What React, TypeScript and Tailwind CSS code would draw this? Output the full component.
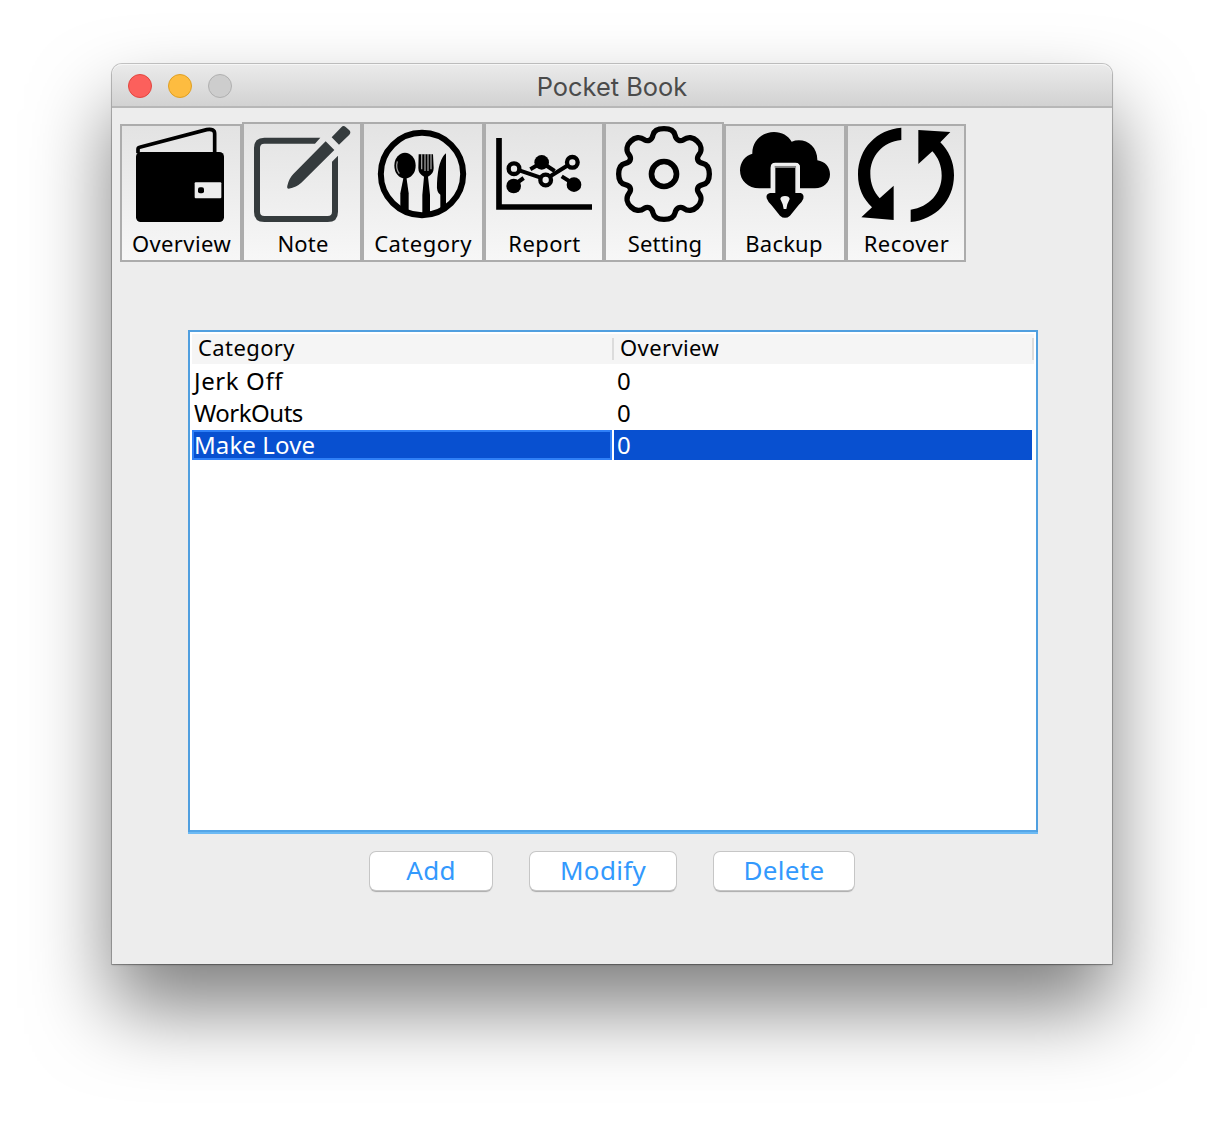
import React from "react";

function WalletIcon() {
  return (
    <svg className="block h-[96px] w-full shrink-0" viewBox="21 33 354 288">
      <path d="M69 114V103Q69 98 74 97L275 44Q299 40 299 56V114" fill="none" stroke="#000" strokeWidth="11" />
      <rect x="63" y="111" width="264" height="210" rx="14" />
      <rect x="239" y="202" width="80" height="48" rx="3" fill="#ededed" />
      <rect x="249" y="217" width="18" height="18" rx="6" />
    </svg>
  );
}

function NoteIcon() {
  return (
    <svg className="block h-[96px] w-full shrink-0" viewBox="387 33 348 288" fill="#353b3d">
      <path d="M616 68H448Q417 68 417 99V290Q417 321 448 321H638Q669 321 669 290V122L651 140V290Q651 303 638 303H448Q435 303 435 290V99Q435 86 448 86H600Z" />
      <path d="M632 79L658 105L559 203Q545 216 521 221Q515 221 517 212Q522 190 535 177Z" />
      <path d="M650 67L679 37Q685 30 692 36L703 46Q709 52 703 59L672 89Z" />
    </svg>
  );
}

function CategoryIcon() {
  return (
    <svg className="block h-[96px] w-full shrink-0" viewBox="12 33 354 288">
      <circle cx="186" cy="177" r="123.500" fill="none" stroke="#000" strokeWidth="18" />
      <ellipse cx="135" cy="152" rx="32" ry="39" />
      <path d="M112 139Q106 160 118 176" fill="none" stroke="#999" strokeWidth="4" />
      <path d="M131 185H139L146 235V296L121 286V235Z" />
      <path d="M176 118H219L221 159Q221 177 204 185L210 240V302H187V240L192 185Q175 177 175 159Z" />
      <path d="M185 117V163M195 117V168M204 117V168M213 117V163" fill="none" stroke="#999" strokeWidth="4" />
      <path d="M258 115V286L241 294V239Q229 234 231 205Q234 134 258 115Z" />
    </svg>
  );
}

function ReportIcon() {
  return (
    <svg className="block h-[96px] w-full shrink-0" viewBox="378 33 348 288">
      <path d="M417 69V276H696" fill="none" stroke="#000" strokeWidth="17" />
      <g fill="none" stroke="#000" strokeWidth="12">
        <path d="M470 204L491 189M511 163L538 147M552 147L584 168M605 184L632 201" />
        <path d="M478 166L542 188M572 183L625 150" />
        <circle cx="462" cy="161" r="16" strokeWidth="13" />
        <circle cx="557" cy="195" r="16" strokeWidth="13" />
        <circle cx="637" cy="142" r="16" strokeWidth="13" />
      </g>
      <circle cx="461" cy="213" r="22" />
      <circle cx="545" cy="142" r="22" />
      <circle cx="642" cy="209" r="22" />
    </svg>
  );
}

function SettingIcon() {
  return (
    <svg className="block h-[96px] w-full shrink-0" viewBox="18 33 348 288" fill="none" stroke="#000">
      <path
        strokeWidth="16"
        strokeLinejoin="round"
        d="M192 41C210 41 222 47 225 60C228 75 240 81 251 74C264 64 280 67 291 78C304 90 307 106 297 119C288 131 293 142 308 145C322 148 328 159 328 177C328 195 322 206 308 209C293 212 288 223 297 235C307 248 304 264 291 276C280 287 264 290 251 280C240 273 228 279 225 294C222 308 210 313 192 313C174 313 162 308 159 294C156 279 144 273 133 280C120 290 104 287 93 276C80 264 77 248 87 235C96 223 91 212 76 209C62 206 56 195 56 177C56 159 62 148 76 145C91 142 96 131 87 119C77 106 80 90 93 78C104 67 120 64 133 74C144 81 156 75 159 60C162 47 174 41 192 41Z"
      />
      <circle cx="192" cy="177" r="37.500" strokeWidth="17" />
    </svg>
  );
}

function BackupIcon() {
  return (
    <svg className="block h-[96px] w-full shrink-0" viewBox="378 33 354 288">
      <path d="M478 220C444 220 420 197 420 166C420 142 435 122 457 116C456 79 485 51 522 51C546 51 564 62 575 80C613 66 653 91 652 136C676 140 690 156 690 178C690 202 671 220 645 220H600V158Q600 144 587 144H525Q512 144 512 158V220Z" />
      <path d="M516 226V158Q516 147 526 147H586Q596 147 596 158V226" fill="none" stroke="#f0f0f0" strokeWidth="7" />
      <path d="M524 153H588V158H524Z" fill="#888" />
      <path d="M526 158H586V234H602Q613 237 610 251Q606 261 596 270L570 302Q555 315 540 302L516 272Q504 262 500 250Q497 237 510 234H526Z" />
      <path d="M541 252Q542 243 555 243Q568 243 569 252L562 268L559 282H551L548 268Z" fill="#f0f0f0" />
    </svg>
  );
}

function RecoverIcon() {
  return (
    <svg className="block h-[96px] w-full shrink-0" viewBox="24 33 348 288">
      <path d="M184 38V75C128 80 91 124 91 176C91 207 102 230 119 250L161 212V315L64 307L96 277C70 251 54 220 54 179C54 99 112 43 184 38Z" />
      <path d="M212 321V284C268 276 305 233 305 182C305 151 294 127 277 109L235 147V45L331 51L301 82C326 107 342 140 342 180C342 259 285 314 212 321Z" />
    </svg>
  );
}

const tools = [
  { label: "Overview", icon: <WalletIcon />, size: "w-[122px] h-[138px]", text: "pl-px tracking-[0.4px]" },
  { label: "Note", icon: <NoteIcon />, size: "w-[120px] h-[140px] pt-[2px]", text: "pl-[2px] tracking-[0.2px]" },
  { label: "Category", icon: <CategoryIcon />, size: "w-[122px] h-[140px] pt-[2px]", text: "tracking-[0.5px]" },
  { label: "Report", icon: <ReportIcon />, size: "w-[120px] h-[140px] pt-[2px]", text: "pl-px tracking-[0.4px]" },
  { label: "Setting", icon: <SettingIcon />, size: "w-[120px] h-[140px] pt-[2px]", text: "pl-[2px] tracking-[0.2px]" },
  { label: "Backup", icon: <BackupIcon />, size: "w-[122px] h-[138px]", text: "pr-[2px] tracking-[0.2px]" },
  { label: "Recover", icon: <RecoverIcon />, size: "w-[120px] h-[138px]", text: "pl-px tracking-[0.5px]" },
];

const rows = [
  { category: "Jerk Off", overview: "0", spacing: "tracking-[0.6px]" },
  { category: "WorkOuts", overview: "0", spacing: "tracking-[-0.5px]" },
];

export default function App() {
  return (
    <div className="h-[1124px] w-[1224px] overflow-hidden bg-white px-[112px] pt-[64px] font-['Noto_Sans','Open_Sans',sans-serif] text-black">
      <main className="flex h-[900px] w-[1000px] flex-col rounded-t-[10px] bg-[#ededed] shadow-[0_0_0_1px_rgba(0,0,0,0.2),0_1px_2px_rgba(0,0,0,0.25),0_44px_80px_rgba(0,0,0,0.5)]">
        <header className="flex h-[44px] shrink-0 items-center rounded-t-[10px] border-b-2 border-[#b7b7b7] bg-linear-to-b from-[#ebebeb] to-[#d2d2d2] px-4 shadow-[inset_0_1px_0_#f6f6f6]">
          <div className="flex w-[104px] gap-4 pt-[2px]">
            <span className="size-6 rounded-full border border-[#e2463f] bg-[#fc605c]" />
            <span className="size-6 rounded-full border border-[#dfa023] bg-[#fdbc40]" />
            <span className="size-6 rounded-full border border-[#b0b0b0] bg-[#cdcdcd]" />
          </div>
          <h1 className="flex-1 pt-[3px] pr-[104px] text-center font-['Inter',sans-serif] text-[25.400px] leading-[30px] text-[#4b4b4b]">
            Pocket Book
          </h1>
        </header>

        <nav className="mt-[14px] ml-2 flex items-end">
          {tools.map((t) => (
            <button
              key={t.label}
              className={`${t.size} flex shrink-0 flex-col justify-start border-2 border-[#acacac] bg-linear-to-b from-[#e3e3e3] to-[#f7f7f7]`}
            >
              {t.icon}
              <span className={`${t.text} mt-[6px] block w-full shrink-0 text-center text-[22px] leading-[30px] whitespace-nowrap`}>
                {t.label}
              </span>
            </button>
          ))}
        </nav>

        <section className="mx-[76px] mt-[68px] h-[504px] w-[850px] border-2 border-b-0 border-[#509fdf] bg-white">
          <div className="flex h-[500px] flex-col border-b-2 border-[#54a6e8] p-[2px]">
            <div className="flex h-[30px] w-[842px] shrink-0 items-center bg-[#f5f5f5] text-[22px] leading-[26px] tracking-[0.4px]">
              <span className="h-[30px] w-[420px] pl-[6px]">Category</span>
              <span className="h-[22px] w-[2px] bg-[#dcdcdc]" />
              <span className="h-[30px] w-[418px] pl-[6px]">Overview</span>
              <span className="h-[22px] w-[2px] bg-[#dcdcdc]" />
            </div>
            {rows.map((r) => (
              <div key={r.category} className="mt-[2px] flex h-[30px] gap-[2px] text-[24px] leading-[29px]">
                <span className={`w-[420px] pl-[2px] ${r.spacing}`}>{r.category}</span>
                <span className="pl-[3px]">{r.overview}</span>
              </div>
            ))}
            <div className="mt-[2px] flex h-[30px] gap-[2px] text-[24px] text-white">
              <span className="w-[420px] border-2 border-[#2f80f7] bg-[#0850d0] leading-[25px] tracking-[0.1px]">Make Love</span>
              <span className="w-[418px] bg-[#0850d0] pl-[3px] leading-[29px]">0</span>
            </div>
          </div>
          <div className="-mx-[2px] h-[2px] bg-[#6cbaf4]" />
        </section>

        <footer className="mt-[18px] ml-[258px] flex gap-[38px] text-[26px] leading-[37px] tracking-[0.3px] text-[#3399fd]">
          {[
            ["Add", "w-[122px]"],
            ["Modify", "w-[146px]"],
            ["Delete", "w-[140px]"],
          ].map(([label, width]) => (
            <button
              key={label}
              className={`${width} flex h-[38px] items-start justify-center rounded-[6px] bg-white shadow-[0_0_0_1px_#c6c6c6,0_2px_1px_#aaa]`}
            >
              {label}
            </button>
          ))}
        </footer>
      </main>
    </div>
  );
}
